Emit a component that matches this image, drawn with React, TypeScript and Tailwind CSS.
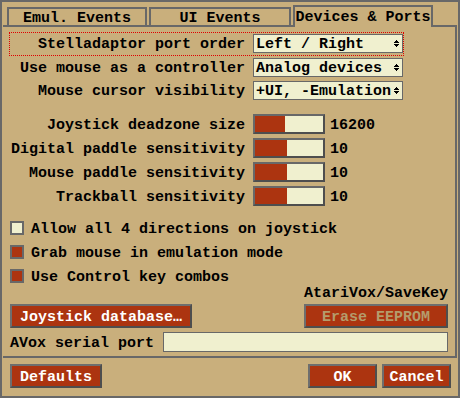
import React from 'react';

const Arrow: React.FC = () => (
  <svg width="5" height="7" viewBox="0 0 5 7" shapeRendering="crispEdges" className="fill-black shrink-0">
    <rect x="2" y="0" width="1" height="1" />
    <rect x="1" y="1" width="3" height="1" />
    <rect x="0" y="2" width="5" height="1" />
    <rect x="0" y="4" width="5" height="1" />
    <rect x="1" y="5" width="3" height="1" />
    <rect x="2" y="6" width="1" height="1" />
  </svg>
);

const Label: React.FC<{ children: React.ReactNode }> = ({ children }) => (
  <div className="w-[235px] h-full flex items-center justify-end pt-[2px] whitespace-pre">{children}</div>
);

const Select: React.FC<{ value: string }> = ({ value }) => (
  <div className="ml-[8px] w-[150px] h-[19px] border border-[#686868] bg-[#f0f0cf] flex items-center justify-between pl-[2px] pr-[3px]">
    <span className="pt-[2px] whitespace-pre">{value}</span>
    <Arrow />
  </div>
);

const Slider: React.FC<{ fill: string; value: string }> = ({ fill, value }) => (
  <div className="ml-[8px] flex items-center h-full">
    <div className="w-[72px] h-[20px] border-2 border-[#686868] border-r-[#4e4e4e] border-b-[#4e4e4e] bg-[#f0f0cf] flex">
      <div className={`h-full bg-[#ac3410] ${fill}`} />
    </div>
    <span className="ml-[5px] pt-[2px]">{value}</span>
  </div>
);

const Check: React.FC<{ on?: boolean; children: React.ReactNode }> = ({ on, children }) => (
  <div className="flex items-center h-[14px] ml-[7px]">
    <div className={`w-[14px] h-[14px] border-2 border-[#686868] ${on ? 'bg-[#ac3410]' : 'bg-[#f0f0cf]'}`} />
    <span className="ml-[7px] pt-[2px] whitespace-pre">{children}</span>
  </div>
);

const Btn: React.FC<{ className?: string; dim?: boolean; children: React.ReactNode }> = ({ className, dim, children }) => (
  <div
    className={`h-[24px] border-2 border-[#6e6e6e] border-r-[#4e4e4e] border-b-[#4e4e4e] bg-[#ac3410] flex items-center justify-center pt-[2px] whitespace-pre ${
      dim ? 'text-[#b49c6c]' : 'text-white'
    } ${className ?? ''}`}
  >
    {children}
  </div>
);

export default function App() {
  return (
    <div className="w-[460px] h-[398px] border-2 border-[#686868] bg-[#c9af7c] text-black font-bold text-[15px] leading-none [font-family:'Liberation_Mono',monospace] flex flex-col">
      {/* tab strip */}
      <div className="h-[23px] shrink-0 flex items-end pl-[5px]">
        <div className="w-[140px] h-[18px] mr-[2px] border-2 border-b-0 border-[#686868] flex items-center justify-center pt-[3px]">
          Emul. Events
        </div>
        <div className="w-[142px] h-[18px] mr-[2px] border-2 border-b-0 border-[#686868] flex items-center justify-center pt-[3px]">
          UI Events
        </div>
        <div className="relative z-10 w-[140px] h-[22px] -mb-[2px] bg-[#c9af7c] border-2 border-b-0 border-[#686868] flex items-start justify-center pt-[3px]">
          Devices &amp; Ports
        </div>
      </div>

      {/* tab panel */}
      <div className="ml-[1px] w-[454px] h-[333px] shrink-0 border-t-2 border-r-2 border-b-2 border-[#686868] flex flex-col pr-[7px]">
        <div className="mt-[5px] ml-[6px] w-[395px] h-[24px] border border-dotted border-[#e00000] flex items-start pt-[1px]">
          <div className="flex h-[19px]">
            <Label>Stelladaptor port order</Label>
            <Select value="Left / Right" />
          </div>
        </div>
        <div className="mt-[2px] ml-[7px] flex h-[19px]">
          <Label>Use mouse as a controller</Label>
          <Select value="Analog devices" />
        </div>
        <div className="mt-[4px] ml-[7px] flex h-[19px]">
          <Label>Mouse cursor visibility</Label>
          <Select value="+UI, -Emulation" />
        </div>

        <div className="mt-[14px] ml-[7px] flex flex-col gap-[4px]">
          <div className="flex h-[20px]">
            <Label>Joystick deadzone size</Label>
            <Slider fill="w-[30px]" value="16200" />
          </div>
          <div className="flex h-[20px]">
            <Label>Digital paddle sensitivity</Label>
            <Slider fill="w-[32px]" value="10" />
          </div>
          <div className="flex h-[20px]">
            <Label>Mouse paddle sensitivity</Label>
            <Slider fill="w-[32px]" value="10" />
          </div>
          <div className="flex h-[20px]">
            <Label>Trackball sensitivity</Label>
            <Slider fill="w-[32px]" value="10" />
          </div>
        </div>

        <div className="mt-[15px] flex flex-col gap-[10px]">
          <Check>Allow all 4 directions on joystick</Check>
          <Check on>Grab mouse in emulation mode</Check>
          <Check on>Use Control key combos</Check>
        </div>

        <div className="mt-[3px] h-[15px] text-right">AtariVox/SaveKey</div>

        <div className="mt-[3px] ml-[7px] flex justify-between">
          <Btn className="w-[182px]">Joystick database…</Btn>
          <Btn className="w-[144px]" dim>
            Erase EEPROM
          </Btn>
        </div>

        <div className="mt-[4px] ml-[7px] flex items-center justify-between h-[20px]">
          <span className="pt-[2px]">AVox serial port</span>
          <div className="w-[285px] h-[20px] border border-[#686868] bg-[#f0f0cf]" />
        </div>
      </div>

      {/* footer */}
      <div className="flex pt-[6px] pl-[8px] pr-[7px]">
        <Btn className="w-[92px]">Defaults</Btn>
        <div className="flex-1" />
        <Btn className="w-[69px]">OK</Btn>
        <Btn className="w-[69px] ml-[5px]">Cancel</Btn>
      </div>
    </div>
  );
}
